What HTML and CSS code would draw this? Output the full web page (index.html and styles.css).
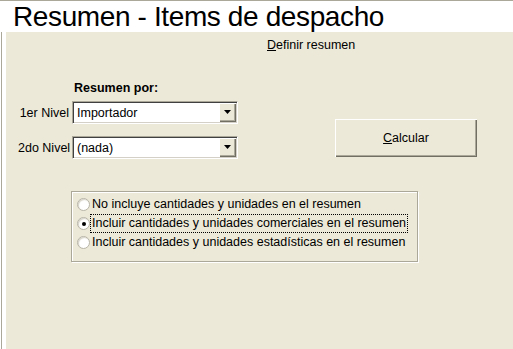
FILE: index.html
```html
<!DOCTYPE html>
<html lang="es">
<head>
<meta charset="utf-8">
<title>Resumen - Items de despacho</title>
<link rel="stylesheet" href="styles.css">
</head>
<body>
<div class="window">
  <header class="titlebar">
    <h1 class="title">Resumen - Items de despacho</h1>
  </header>
  <div class="frame">
    <div class="panel">
      <div class="caption"><span class="u">D</span>efinir resumen</div>
      <div class="top">
        <div class="levels">
          <div class="levels-head">Resumen por:</div>
          <span class="lbl">1er Nivel</span>
          <div class="combo">
            <span class="combo-text">Importador</span>
            <span class="combo-btn"><svg width="7" height="4" viewBox="0 0 7 4"><path d="M0 0H7L3.5 4Z" fill="#000"/></svg></span>
          </div>
          <span class="lbl">2do Nivel</span>
          <div class="combo">
            <span class="combo-text">(nada)</span>
            <span class="combo-btn"><svg width="7" height="4" viewBox="0 0 7 4"><path d="M0 0H7L3.5 4Z" fill="#000"/></svg></span>
          </div>
        </div>
        <button class="btn" type="button"><span class="u">C</span>alcular</button>
      </div>
      <div class="group">
        <div class="opt"><span class="radio"></span><span class="opt-text">No incluye cantidades y unidades en el resumen</span></div>
        <div class="opt"><span class="radio checked"></span><span class="opt-text focus">Incluir cantidades y unidades comerciales en el resumen</span></div>
        <div class="opt"><span class="radio"></span><span class="opt-text">Incluir cantidades y unidades estadísticas en el resumen</span></div>
      </div>
    </div>
  </div>
</div>
</body>
</html>
```
FILE: styles.css
```css
html, body {
  margin: 0;
  padding: 0;
  background: #fff;
}
body {
  font-family: "Liberation Sans", Arial, sans-serif;
  font-size: 12.5px;
  color: #000;
  width: 513px;
  height: 349px;
  overflow: hidden;
}
.window {
  display: flex;
  flex-direction: column;
  height: 349px;
  border-top: 1px solid #aca899;
  box-sizing: border-box;
}
.titlebar {
  height: 31px;
  flex: none;
}
.title {
  margin: 0;
  padding-left: 13px;
  font-family: "Liberation Sans", Arial, sans-serif;
  font-weight: normal;
  font-size: 28px;
  letter-spacing: -0.38px;
  line-height: 31px;
  white-space: nowrap;
}
.frame {
  flex: 1;
  display: flex;
  margin-left: 1px;
  border-left: 1px solid #aca899;
  padding-left: 4px;
  background: #fff;
}
.panel {
  flex: 1;
  background: #ece9d8;
  display: flex;
  flex-direction: column;
  align-items: flex-start;
}
.u { text-decoration: underline; }
.caption {
  margin-top: 6px;
  padding-left: 261px;
  line-height: 14px;
}
.top {
  display: flex;
  align-items: flex-start;
  margin-top: 29px;
}
.levels {
  display: grid;
  grid-template-columns: 51px 166px;
  column-gap: 3px;
  row-gap: 0;
  padding-left: 12px;
  align-items: center;
}
.levels-head {
  grid-column: 2;
  font-weight: bold;
  line-height: 14px;
  padding-left: 2px;
  margin-bottom: 6px;
}
.lbl {
  text-align: right;
  white-space: nowrap;
  padding-top: 1px;
}
.combo {
  height: 23px;
  box-sizing: border-box;
  background: #fff;
  border: 1px solid;
  border-color: #aca899 #fff #fff #aca899;
  box-shadow: inset 1px 1px 0 #404040, inset -1px -1px 0 #d4d0c8;
  display: flex;
  align-items: stretch;
  padding: 1px;
}
.combo + .lbl { margin-top: 12px; }
.combo + .lbl + .combo { margin-top: 12px; }
.combo-text {
  flex: 1;
  padding-left: 3px;
  padding-top: 1px;
  line-height: 19px;
}
.combo-btn {
  width: 17px;
  flex: none;
  background: #ece9d8;
  box-shadow: inset 1px 1px 0 #fff, inset -1px -1px 0 #716f64, inset -2px -2px 0 #aca899;
  display: flex;
  align-items: center;
  justify-content: center;
  padding-bottom: 1px;
  box-sizing: border-box;
}
.btn {
  margin-top: 38px;
  margin-left: 97px;
  width: 142px;
  height: 38px;
  padding: 0;
  background: #ece9d8;
  font-family: "Liberation Sans", Arial, sans-serif;
  font-size: 12.5px;
  color: #000;
  border: none;
  box-shadow: inset 1px 1px 0 #fff, inset -1px -1px 0 #716f64, inset -2px -2px 0 #aca899;
}
.group {
  margin-top: 32px;
  margin-left: 65px;
  width: 347px;
  box-sizing: border-box;
  border: 1px solid #aca899;
  box-shadow: inset 1px 1px 0 #fff, 1px 1px 0 #fff;
  padding: 3px 0 9px 5px;
  display: flex;
  flex-direction: column;
}
.opt {
  height: 19px;
  display: flex;
  align-items: center;
  white-space: nowrap;
}
.radio {
  width: 13px;
  height: 13px;
  box-sizing: border-box;
  border-radius: 50%;
  background: #fff;
  border: 1px solid #b7b4a7;
  box-shadow: inset 1px 1px 1px #d6d3c8;
  display: flex;
  align-items: center;
  justify-content: center;
  flex: none;
}
.radio.checked::after {
  content: "";
  width: 4px;
  height: 4px;
  border-radius: 50%;
  background: #000;
}
.opt-text {
  margin-left: 1px;
  padding: 0 1px;
  line-height: 17px;
}
.opt-text.focus {
  outline: 1px dotted #000;
}
```
